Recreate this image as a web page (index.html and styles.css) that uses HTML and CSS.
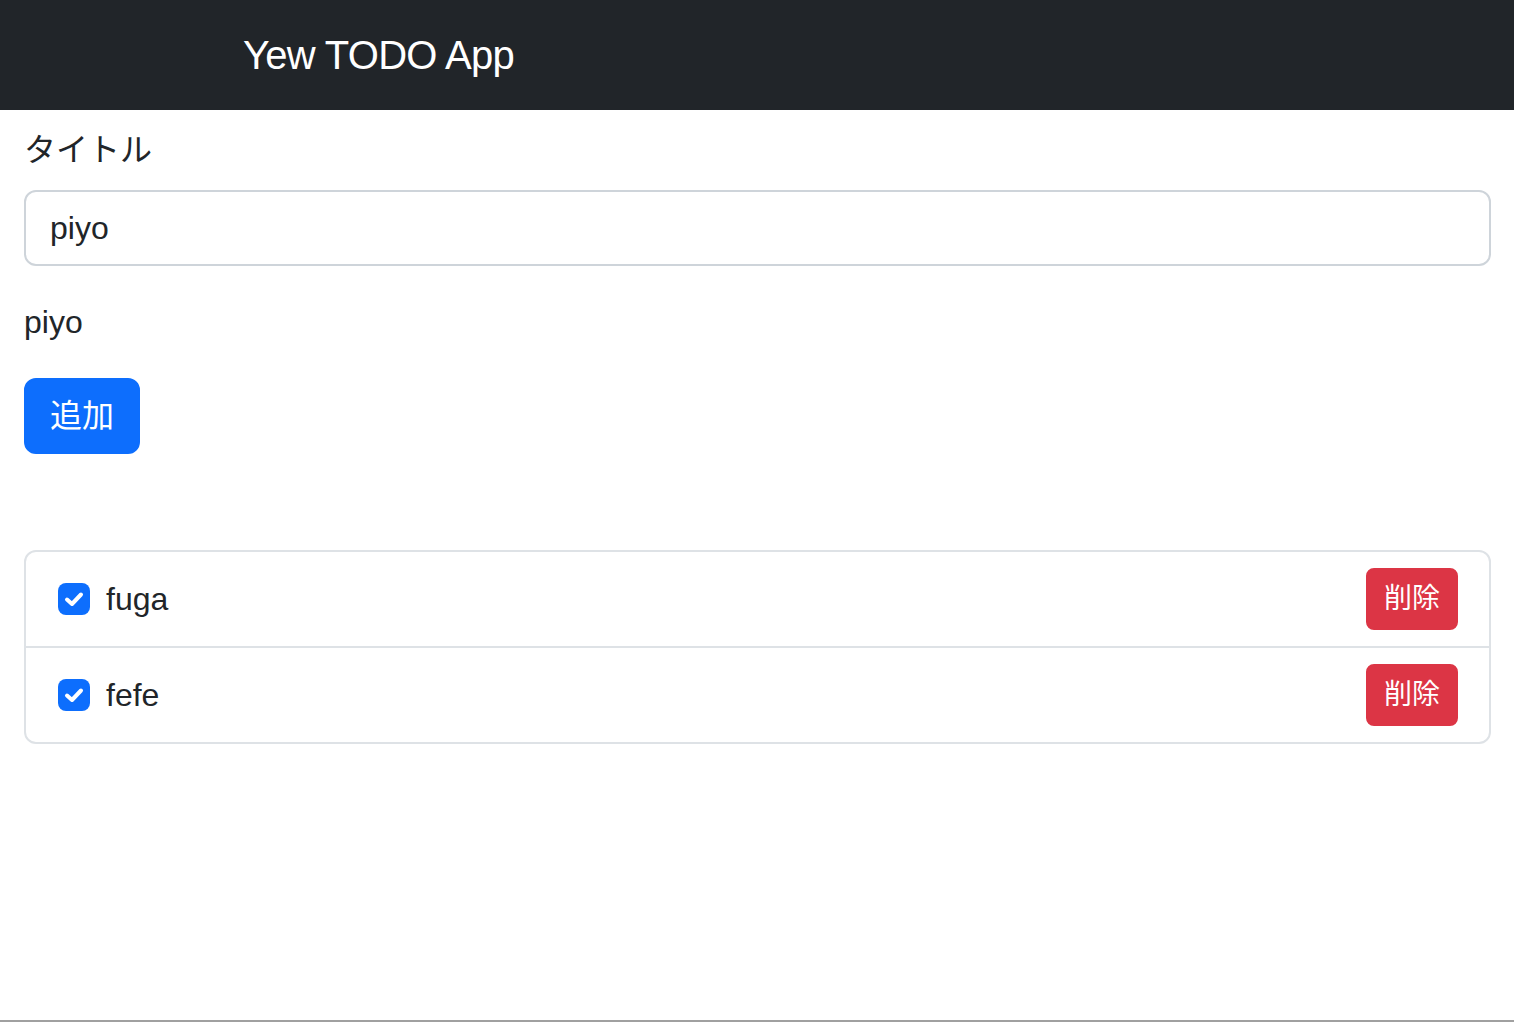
FILE: index.html
```html
<!DOCTYPE html>
<html lang="ja">
<head>
<meta charset="utf-8">
<title>Yew TODO App</title>
<link rel="stylesheet" href="styles.css">
</head>
<body>
<div class="page">
  <header class="navbar">
    <span class="brand">Yew TODO App</span>
  </header>
  <main class="content">
    <label class="label" for="title">タイトル</label>
    <input id="title" class="input" type="text" value="piyo">
    <p class="preview">piyo</p>
    <button class="btn btn-primary">追加</button>
    <ul class="list">
      <li class="item">
        <span class="check"><svg viewBox="0 0 32 32" width="32" height="32"><path d="M9 16.5 L14 21 L23 11.5" fill="none" stroke="#fff" stroke-width="4" stroke-linecap="round" stroke-linejoin="round"/></svg></span>
        <span class="item-text">fuga</span>
        <button class="btn btn-danger">削除</button>
      </li>
      <li class="item">
        <span class="check"><svg viewBox="0 0 32 32" width="32" height="32"><path d="M9 16.5 L14 21 L23 11.5" fill="none" stroke="#fff" stroke-width="4" stroke-linecap="round" stroke-linejoin="round"/></svg></span>
        <span class="item-text">fefe</span>
        <button class="btn btn-danger">削除</button>
      </li>
    </ul>
  </main>
</div>
</body>
</html>
```

FILE: styles.css
```css
html, body {
  margin: 0;
  padding: 0;
  background: #ffffff;
}
body {
  font-family: "Liberation Sans", "Noto Sans CJK JP", sans-serif;
  color: #212529;
  font-size: 32px;
  line-height: 48px;
}
.page {
  min-height: 1022px;
  box-sizing: border-box;
  border-bottom: 2px solid #a0a0a0;
  display: flex;
  flex-direction: column;
}
.navbar {
  height: 110px;
  background: #212529;
  display: flex;
  align-items: center;
  padding-left: 243px;
  box-sizing: border-box;
}
.brand {
  color: #ffffff;
  font-size: 40px;
  letter-spacing: -0.7px;
  line-height: 60px;
}
.content {
  padding: 16px 23px 0 24px;
  display: flex;
  flex-direction: column;
  align-items: flex-start;
}
.label {
  display: block;
  margin-bottom: 16px;
}
.input {
  display: block;
  width: 100%;
  box-sizing: border-box;
  height: 76px;
  padding: 12px 24px;
  font: inherit;
  color: #212529;
  border: 2px solid #ced4da;
  border-radius: 12px;
  background: #fff;
  outline: none;
}
.preview {
  margin: 32px 0 32px 0;
}
.btn {
  font: inherit;
  border: 2px solid transparent;
  color: #fff;
  cursor: pointer;
}
.btn-primary {
  background: #0d6efd;
  border-color: #0d6efd;
  padding: 12px 24px;
  border-radius: 12px;
  line-height: 48px;
}
.list {
  list-style: none;
  margin: 96px 0 0 0;
  padding: 0;
  width: 100%;
  box-sizing: border-box;
  border: 2px solid #dee2e6;
  border-radius: 12px;
}
.item {
  display: flex;
  align-items: center;
  padding: 16px 31px 16px 32px;
  height: 94px;
  box-sizing: border-box;
}
.item + .item {
  border-top: 2px solid #dee2e6;
  height: 96px;
}
.check {
  width: 32px;
  height: 32px;
  border-radius: 8px;
  background: #0d6efd;
  display: flex;
  margin-right: 16px;
  flex-shrink: 0;
}
.item-text {
  flex: 1;
}
.btn-danger {
  background: #dc3545;
  border-color: #dc3545;
  font-size: 28px;
  line-height: 42px;
  padding: 8px 16px;
  border-radius: 8px;
}
```
